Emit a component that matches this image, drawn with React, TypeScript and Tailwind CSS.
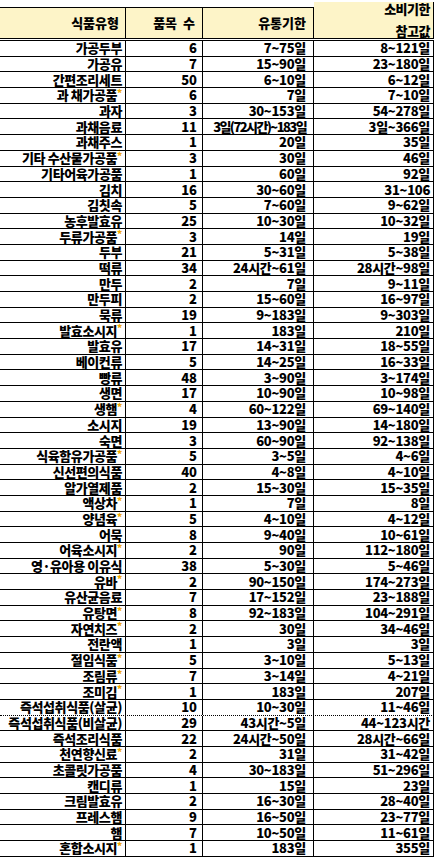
import React from "react";

type Row = { name: string; star?: boolean; count: string; shelf: string; use: string; dotted?: boolean; tight?: boolean };

const ROWS: Row[] = [
    { name: "가공두부", count: "6", shelf: "7~75일", use: "8~121일" },
    { name: "가공유", count: "7", shelf: "15~90일", use: "23~180일" },
    { name: "간편조리세트", count: "50", shelf: "6~10일", use: "6~12일" },
    { name: "과 채가공품", star: true, count: "6", shelf: "7일", use: "7~10일" },
    { name: "과자", count: "3", shelf: "30~153일", use: "54~278일" },
    { name: "과채음료", count: "11", shelf: "3일(72시간)~183일", use: "3일~366일", tight: true },
    { name: "과채주스", count: "1", shelf: "20일", use: "35일" },
    { name: "기타 수산물가공품", star: true, count: "3", shelf: "30일", use: "46일" },
    { name: "기타어육가공품", count: "1", shelf: "60일", use: "92일" },
    { name: "김치", count: "16", shelf: "30~60일", use: "31~106" },
    { name: "김칫속", count: "5", shelf: "7~60일", use: "9~62일" },
    { name: "농후발효유", count: "25", shelf: "10~30일", use: "10~32일" },
    { name: "두류가공품", star: true, count: "3", shelf: "14일", use: "19일" },
    { name: "두부", count: "21", shelf: "5~31일", use: "5~38일" },
    { name: "떡류", count: "34", shelf: "24시간~61일", use: "28시간~98일" },
    { name: "만두", count: "2", shelf: "7일", use: "9~11일" },
    { name: "만두피", count: "2", shelf: "15~60일", use: "16~97일" },
    { name: "묵류", count: "19", shelf: "9~183일", use: "9~303일" },
    { name: "발효소시지", star: true, count: "1", shelf: "183일", use: "210일" },
    { name: "발효유", count: "17", shelf: "14~31일", use: "18~55일" },
    { name: "베이컨류", count: "5", shelf: "14~25일", use: "16~33일" },
    { name: "빵류", count: "48", shelf: "3~90일", use: "3~174일" },
    { name: "생면", count: "17", shelf: "10~90일", use: "10~98일" },
    { name: "생햄", star: true, count: "4", shelf: "60~122일", use: "69~140일" },
    { name: "소시지", count: "19", shelf: "13~90일", use: "14~180일" },
    { name: "숙면", count: "3", shelf: "60~90일", use: "92~138일" },
    { name: "식육함유가공품", star: true, count: "5", shelf: "3~5일", use: "4~6일" },
    { name: "신선편의식품", count: "40", shelf: "4~8일", use: "4~10일" },
    { name: "알가열제품", count: "2", shelf: "15~30일", use: "15~35일" },
    { name: "액상차", star: true, count: "1", shelf: "7일", use: "8일" },
    { name: "양념육", star: true, count: "5", shelf: "4~10일", use: "4~12일" },
    { name: "어묵", count: "8", shelf: "9~40일", use: "10~61일" },
    { name: "어육소시지", star: true, count: "2", shelf: "90일", use: "112~180일" },
    { name: "영·유아용 이유식", count: "38", shelf: "5~30일", use: "5~46일" },
    { name: "유바", star: true, count: "2", shelf: "90~150일", use: "174~273일" },
    { name: "유산균음료", count: "7", shelf: "17~152일", use: "23~188일" },
    { name: "유탕면", star: true, count: "8", shelf: "92~183일", use: "104~291일" },
    { name: "자연치즈", star: true, count: "2", shelf: "30일", use: "34~46일" },
    { name: "전란액", count: "1", shelf: "3일", use: "3일" },
    { name: "절임식품", star: true, count: "5", shelf: "3~10일", use: "5~13일" },
    { name: "조림류", star: true, count: "7", shelf: "3~14일", use: "4~21일" },
    { name: "조미김", star: true, count: "1", shelf: "183일", use: "207일" },
    { name: "즉석섭취식품(살균)", count: "10", shelf: "10~30일", use: "11~46일", dotted: true },
    { name: "즉석섭취식품(비살균)", count: "29", shelf: "43시간~5일", use: "44~123시간" },
    { name: "즉석조리식품", count: "22", shelf: "24시간~50일", use: "28시간~66일" },
    { name: "천연향신료", star: true, count: "2", shelf: "31일", use: "31~42일" },
    { name: "초콜릿가공품", count: "4", shelf: "30~183일", use: "51~296일" },
    { name: "캔디류", count: "1", shelf: "15일", use: "23일" },
    { name: "크림발효유", count: "2", shelf: "16~30일", use: "28~40일" },
    { name: "프레스햄", count: "9", shelf: "16~50일", use: "23~77일" },
    { name: "햄", count: "7", shelf: "10~50일", use: "11~61일" },
    { name: "혼합소시지", star: true, count: "1", shelf: "183일", use: "355일" },
];

const font = { fontFamily: '"Noto Sans CJK KR", "Noto Sans", sans-serif' };

export default function App() {
    return (
        <div className="w-[434px] h-[864px] bg-white text-black font-black text-[13px] leading-[14px] overflow-hidden" style={font}>
            {/* header */}
            <div className="grid grid-cols-[126px_77px_111px_120px] mt-[7px] h-[34px] border-b-[3px] border-double border-black">
                <div className="bg-[#fdf4c8] border-t border-r border-black flex items-center justify-end pr-[6px]">식품유형</div>
                <div className="bg-[#fdf4c8] border-t border-r border-black flex items-center justify-end pr-[7px] whitespace-pre">품목  수</div>
                <div className="bg-[#fdf4c8] border-t border-r border-black flex items-center justify-end pr-[7px]">유통기한</div>
                <div className="bg-[#fdf4c8] border-r border-black -mt-[5px] flex flex-col items-end justify-between pr-[3px] tracking-[-0.5px]">
                    <span>소비기한</span>
                    <span>참고값</span>
                </div>
            </div>

            {/* body */}
            <div className="flex flex-col">
                {ROWS.map((r, i) => (
                    <div
                        key={i}
                        className={`grid grid-cols-[126px_77px_111px_120px] h-[15.7px] border-b border-black ${r.dotted ? "border-dotted" : ""}`}
                    >
                        <div className="border-r border-black flex items-center justify-end pr-[3px] tracking-[-0.4px] whitespace-nowrap">
                            <span>{r.name}</span>
                            {r.star && <span className="text-[10px] leading-none self-start text-[#f0a800]">*</span>}
                        </div>
                        <div className="border-r border-black flex items-center justify-end pr-[5px]">{r.count}</div>
                        <div
                            className={`border-r border-black flex items-center justify-end pr-[7px] whitespace-nowrap ${r.tight ? "tracking-[-1.6px]" : "tracking-[-0.3px]"}`}
                        >
                            {r.shelf}
                        </div>
                        <div className="border-r border-black flex items-center justify-end pr-[3px] whitespace-nowrap tracking-[-0.3px]">{r.use}</div>
                    </div>
                ))}
            </div>
        </div>
    );
}
